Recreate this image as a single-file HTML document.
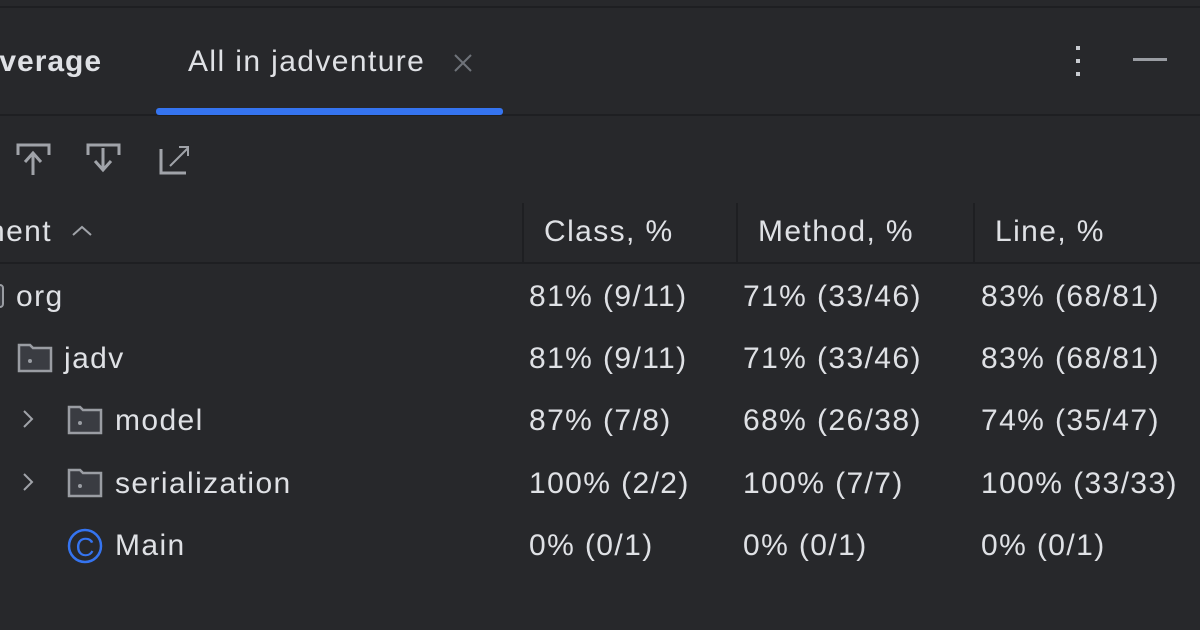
<!DOCTYPE html>
<html><head><style>
body{margin:0;width:1200px;height:630px;background:#27282b;overflow:hidden;position:relative;font-family:"Liberation Sans",sans-serif;color:#dfe1e5}
.a{position:absolute;white-space:nowrap}
.t{font-size:30px;line-height:34px;letter-spacing:1.4px}
.h{position:absolute;background:#1e1f22}
</style></head><body>
<div class="h" style="left:0;top:6px;width:1200px;height:2px"></div>
<div class="h" style="left:0;top:114px;width:1200px;height:2px"></div>
<div class="a" style="left:156px;top:108px;width:347px;height:7px;background:#3574f0;border-radius:3px"></div>
<div class="a t" style="left:-20px;top:45px;font-weight:bold;color:#dfe1e5;letter-spacing:1px">overage</div>
<div class="a t" style="left:188px;top:45px;color:#dfe1e5">All in jadventure</div>
<svg class="a" style="left:452px;top:52px" width="22" height="22"><path d="M3 3L19 19M19 3L3 19" stroke="#6f737a" stroke-width="2"/></svg>
<div class="a" style="left:1076px;top:46px;width:4px;height:4px;background:#c9ccd1;box-shadow:0 13px 0 #c9ccd1,0 26px 0 #c9ccd1"></div>
<div class="a" style="left:1133px;top:58px;width:34px;height:3px;background:#9a9da3"></div>
<svg class="a" style="left:0;top:135px" width="200" height="45" fill="none" stroke="#a0a3a9" stroke-width="3">
<path d="M18 20V10H49V20"/><path d="M33 40V20M25 27L33 18L41 27" /><path d="M88 20V10H119V20"/><path d="M103 13V33M95 26L103 35L111 26"/>
<path d="M161 14V38H186"/><path d="M170 31L188 13M179 12H188V21" stroke-width="2"/>
</svg>
<div class="h" style="left:0;top:262px;width:1200px;height:2px"></div>
<div class="h" style="left:522px;top:203px;width:2px;height:59px"></div>
<div class="h" style="left:736px;top:203px;width:2px;height:59px"></div>
<div class="h" style="left:973px;top:203px;width:2px;height:59px"></div>
<div class="a t" style="left:-12px;top:215px">nent</div>
<svg class="a" style="left:70px;top:222px" width="24" height="16"><path d="M3 13L12 5L21 13" stroke="#a0a3a9" stroke-width="2" fill="none"/></svg>
<div class="a t" style="left:544px;top:215px">Class, %</div>
<div class="a t" style="left:758px;top:215px">Method, %</div>
<div class="a t" style="left:995px;top:215px">Line, %</div>

<svg class="a" style="left:0;top:270px" width="120" height="300" fill="none">
<rect x="-10" y="15" width="13" height="22" rx="3" stroke="#9a9da3" stroke-width="2" fill="#3a3c42"/>
<g stroke="#9a9da3" stroke-width="2.5" fill="#3a3c42">
<path d="M19 75h11l3 3h18v23h-32z"/><path d="M69 137h11l3 3h18v23h-32z"/><path d="M69 200h11l3 3h18v23h-32z"/>
</g>
<g fill="#9a9da3"><circle cx="30" cy="91" r="2"/><circle cx="80" cy="153" r="2"/><circle cx="80" cy="216" r="2"/></g>
<g stroke="#a0a3a9" stroke-width="2"><path d="M24 141l8 8l-8 8"/><path d="M24 204l8 8l-8 8"/></g>
<circle cx="85" cy="276" r="16" stroke="#3574f0" stroke-width="2.5"/>
<text x="85" y="286" text-anchor="middle" fill="#3574f0" font-size="26" font-family="Liberation Sans">C</text>
</svg>
<div class="a t" style="left:16px;top:280px">org</div>
<div class="a t" style="left:64px;top:342px">jadv</div>
<div class="a t" style="left:115px;top:404px">model</div>
<div class="a t" style="left:115px;top:467px">serialization</div>
<div class="a t" style="left:115px;top:529px">Main</div>

<div class="a t" style="left:529px;top:280px">81% (9/11)</div>
<div class="a t" style="left:529px;top:342px">81% (9/11)</div>
<div class="a t" style="left:529px;top:404px">87% (7/8)</div>
<div class="a t" style="left:529px;top:467px">100% (2/2)</div>
<div class="a t" style="left:529px;top:529px">0% (0/1)</div>
<div class="a t" style="left:743px;top:280px">71% (33/46)</div>
<div class="a t" style="left:743px;top:342px">71% (33/46)</div>
<div class="a t" style="left:743px;top:404px">68% (26/38)</div>
<div class="a t" style="left:743px;top:467px">100% (7/7)</div>
<div class="a t" style="left:743px;top:529px">0% (0/1)</div>
<div class="a t" style="left:981px;top:280px">83% (68/81)</div>
<div class="a t" style="left:981px;top:342px">83% (68/81)</div>
<div class="a t" style="left:981px;top:404px">74% (35/47)</div>
<div class="a t" style="left:981px;top:467px">100% (33/33)</div>
<div class="a t" style="left:981px;top:529px">0% (0/1)</div>
</body></html>
